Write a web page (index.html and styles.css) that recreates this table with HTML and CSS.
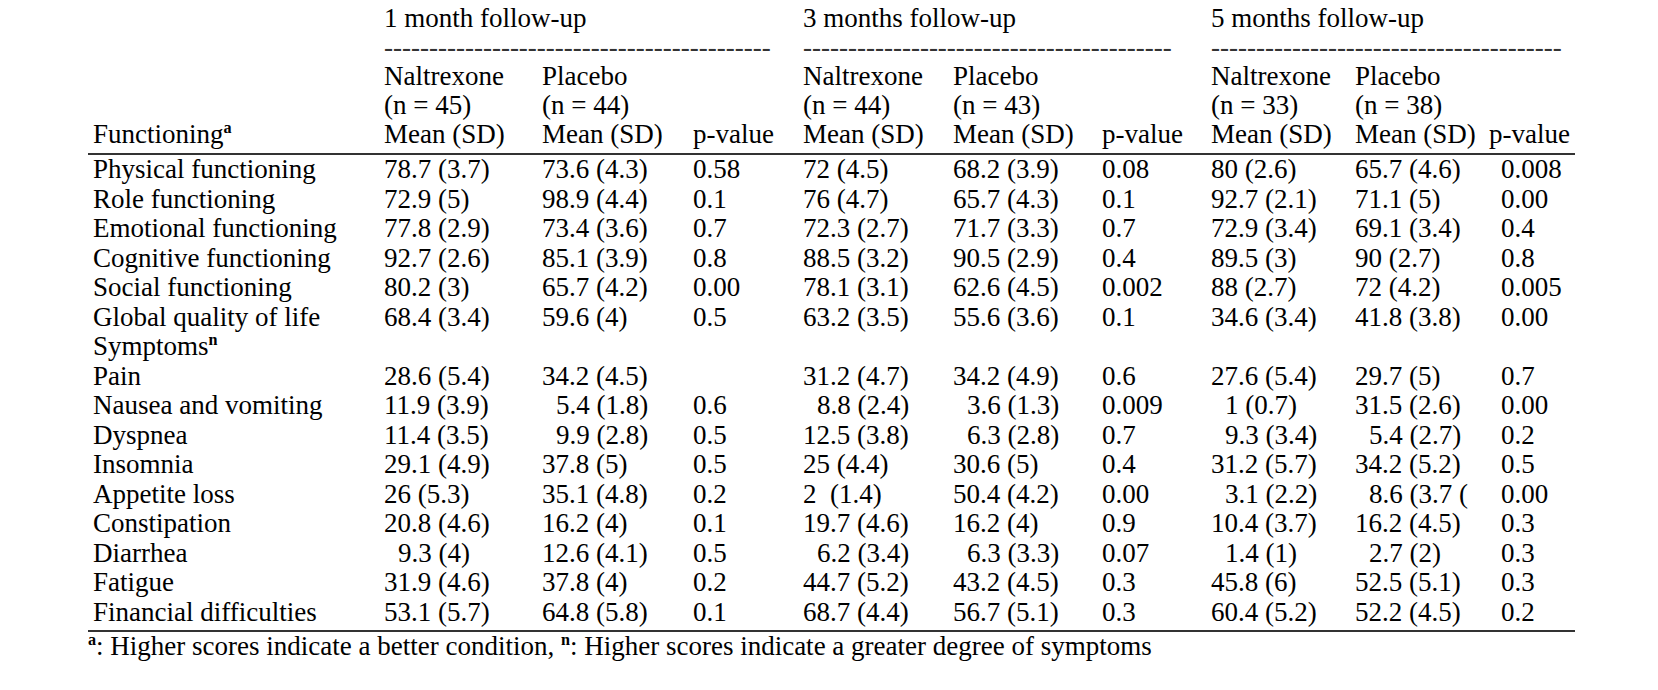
FILE: index.html
```html
<!DOCTYPE html>
<html>
<head>
<meta charset="utf-8">
<link rel="stylesheet" href="styles.css">
</head>
<body>
<div class="page">
<table class="qol">
  <colgroup>
    <col class="c-label"><col class="c-n1"><col class="c-p1"><col class="c-v1">
    <col class="c-n3"><col class="c-p3"><col class="c-v3">
    <col class="c-n5"><col class="c-p5"><col class="c-v5">
  </colgroup>
  <thead>
    <tr class="h first"><td></td><td colspan="3">1 month follow-up</td><td colspan="3">3 months follow-up</td><td colspan="3">5 months follow-up</td></tr>
    <tr class="h"><td></td><td colspan="3"><span class="dash">-------------------------------------------</span></td><td colspan="3"><span class="dash">-----------------------------------------</span></td><td colspan="3"><span class="dash">---------------------------------------</span></td></tr>
    <tr class="h"><td></td><td>Naltrexone</td><td>Placebo</td><td></td><td>Naltrexone</td><td>Placebo</td><td></td><td>Naltrexone</td><td>Placebo</td><td></td></tr>
    <tr class="h"><td></td><td>(n = 45)</td><td>(n = 44)</td><td></td><td>(n = 44)</td><td>(n = 43)</td><td></td><td>(n = 33)</td><td>(n = 38)</td><td></td></tr>
    <tr class="h last"><td class="lbl">Functioning<sup>a</sup></td><td>Mean (SD)</td><td>Mean (SD)</td><td>p-value</td><td>Mean (SD)</td><td>Mean (SD)</td><td>p-value</td><td>Mean (SD)</td><td>Mean (SD)</td><td>p-value</td></tr>
  </thead>
  <tbody>
    <tr class="r first"><td class="lbl">Physical functioning</td><td>78.7 (3.7)</td><td>73.6 (4.3)</td><td>0.58</td><td>72 (4.5)</td><td>68.2 (3.9)</td><td>0.08</td><td>80 (2.6)</td><td>65.7 (4.6)</td><td class="pv">0.008</td></tr>
    <tr class="r"><td class="lbl">Role functioning</td><td>72.9 (5)</td><td>98.9 (4.4)</td><td>0.1</td><td>76 (4.7)</td><td>65.7 (4.3)</td><td>0.1</td><td>92.7 (2.1)</td><td>71.1 (5)</td><td class="pv">0.00</td></tr>
    <tr class="r"><td class="lbl">Emotional functioning</td><td>77.8 (2.9)</td><td>73.4 (3.6)</td><td>0.7</td><td>72.3 (2.7)</td><td>71.7 (3.3)</td><td>0.7</td><td>72.9 (3.4)</td><td>69.1 (3.4)</td><td class="pv">0.4</td></tr>
    <tr class="r"><td class="lbl">Cognitive functioning</td><td>92.7 (2.6)</td><td>85.1 (3.9)</td><td>0.8</td><td>88.5 (3.2)</td><td>90.5 (2.9)</td><td>0.4</td><td>89.5 (3)</td><td>90 (2.7)</td><td class="pv">0.8</td></tr>
    <tr class="r"><td class="lbl">Social functioning</td><td>80.2 (3)</td><td>65.7 (4.2)</td><td>0.00</td><td>78.1 (3.1)</td><td>62.6 (4.5)</td><td>0.002</td><td>88 (2.7)</td><td>72 (4.2)</td><td class="pv">0.005</td></tr>
    <tr class="r"><td class="lbl">Global quality of life</td><td>68.4 (3.4)</td><td>59.6 (4)</td><td>0.5</td><td>63.2 (3.5)</td><td>55.6 (3.6)</td><td>0.1</td><td>34.6 (3.4)</td><td>41.8 (3.8)</td><td class="pv">0.00</td></tr>
    <tr class="r"><td class="lbl">Symptoms<sup>n</sup></td><td></td><td></td><td></td><td></td><td></td><td></td><td></td><td></td><td></td></tr>
    <tr class="r"><td class="lbl">Pain</td><td>28.6 (5.4)</td><td>34.2 (4.5)</td><td></td><td>31.2 (4.7)</td><td>34.2 (4.9)</td><td>0.6</td><td>27.6 (5.4)</td><td>29.7 (5)</td><td class="pv">0.7</td></tr>
    <tr class="r"><td class="lbl">Nausea and vomiting</td><td>11.9 (3.9)</td><td class="ind">5.4 (1.8)</td><td>0.6</td><td class="ind">8.8 (2.4)</td><td class="ind">3.6 (1.3)</td><td>0.009</td><td class="ind">1 (0.7)</td><td>31.5 (2.6)</td><td class="pv">0.00</td></tr>
    <tr class="r"><td class="lbl">Dyspnea</td><td>11.4 (3.5)</td><td class="ind">9.9 (2.8)</td><td>0.5</td><td>12.5 (3.8)</td><td class="ind">6.3 (2.8)</td><td>0.7</td><td class="ind">9.3 (3.4)</td><td class="ind">5.4 (2.7)</td><td class="pv">0.2</td></tr>
    <tr class="r"><td class="lbl">Insomnia</td><td>29.1 (4.9)</td><td>37.8 (5)</td><td>0.5</td><td>25 (4.4)</td><td>30.6 (5)</td><td>0.4</td><td>31.2 (5.7)</td><td>34.2 (5.2)</td><td class="pv">0.5</td></tr>
    <tr class="r"><td class="lbl">Appetite loss</td><td>26 (5.3)</td><td>35.1 (4.8)</td><td>0.2</td><td>2  (1.4)</td><td>50.4 (4.2)</td><td>0.00</td><td class="ind">3.1 (2.2)</td><td class="ind">8.6 (3.7 (</td><td class="pv">0.00</td></tr>
    <tr class="r"><td class="lbl">Constipation</td><td>20.8 (4.6)</td><td>16.2 (4)</td><td>0.1</td><td>19.7 (4.6)</td><td>16.2 (4)</td><td>0.9</td><td>10.4 (3.7)</td><td>16.2 (4.5)</td><td class="pv">0.3</td></tr>
    <tr class="r"><td class="lbl">Diarrhea</td><td class="ind">9.3 (4)</td><td>12.6 (4.1)</td><td>0.5</td><td class="ind">6.2 (3.4)</td><td class="ind">6.3 (3.3)</td><td>0.07</td><td class="ind">1.4 (1)</td><td class="ind">2.7 (2)</td><td class="pv">0.3</td></tr>
    <tr class="r"><td class="lbl">Fatigue</td><td>31.9 (4.6)</td><td>37.8 (4)</td><td>0.2</td><td>44.7 (5.2)</td><td>43.2 (4.5)</td><td>0.3</td><td>45.8 (6)</td><td>52.5 (5.1)</td><td class="pv">0.3</td></tr>
    <tr class="r last"><td class="lbl">Financial difficulties</td><td>53.1 (5.7)</td><td>64.8 (5.8)</td><td>0.1</td><td>68.7 (4.4)</td><td>56.7 (5.1)</td><td>0.3</td><td>60.4 (5.2)</td><td>52.2 (4.5)</td><td class="pv">0.2</td></tr>
  </tbody>
</table>
<p class="note"><sup>a</sup>: Higher scores indicate a better condition, <sup>n</sup>: Higher scores indicate a greater degree of symptoms</p>
</div>
</body>
</html>
```
FILE: styles.css
```css
html, body {
  margin: 0;
  padding: 0;
  background: #ffffff;
}

.page {
  padding: 4px 0 0 88px;
  font-family: "Liberation Serif", "Times New Roman", serif;
  font-size: 27px;
  color: #000000;
}

.qol {
  border-collapse: collapse;
  table-layout: fixed;
  width: 1487px;
}

.c-label { width: 296px; }
.c-n1 { width: 158px; }
.c-p1 { width: 151px; }
.c-v1 { width: 110px; }
.c-n3 { width: 150px; }
.c-p3 { width: 149px; }
.c-v3 { width: 109px; }
.c-n5 { width: 144px; }
.c-p5 { width: 134px; }
.c-v5 { width: 86px; }

.qol td {
  padding: 0;
  white-space: pre;
  vertical-align: top;
  text-align: left;
}

.qol td.lbl {
  padding-left: 5px;
}

.h td {
  height: 29px;
  line-height: 29px;
}

.h.last td {
  height: 33px;
  border-bottom: 2px solid #333333;
}

.r td {
  height: 29.5px;
  line-height: 29.5px;
}

.r.last td {
  height: 32.5px;
  border-bottom: 2px solid #333333;
}

.qol td.ind {
  padding-left: 14px;
}

.qol td.pv {
  padding-left: 12px;
}

.dash {
  color: #333333;
}

sup {
  font-size: 0.6em;
  font-weight: bold;
  vertical-align: 0.6em;
  line-height: 0;
}

.note {
  margin: 0;
  line-height: 29px;
}
```
